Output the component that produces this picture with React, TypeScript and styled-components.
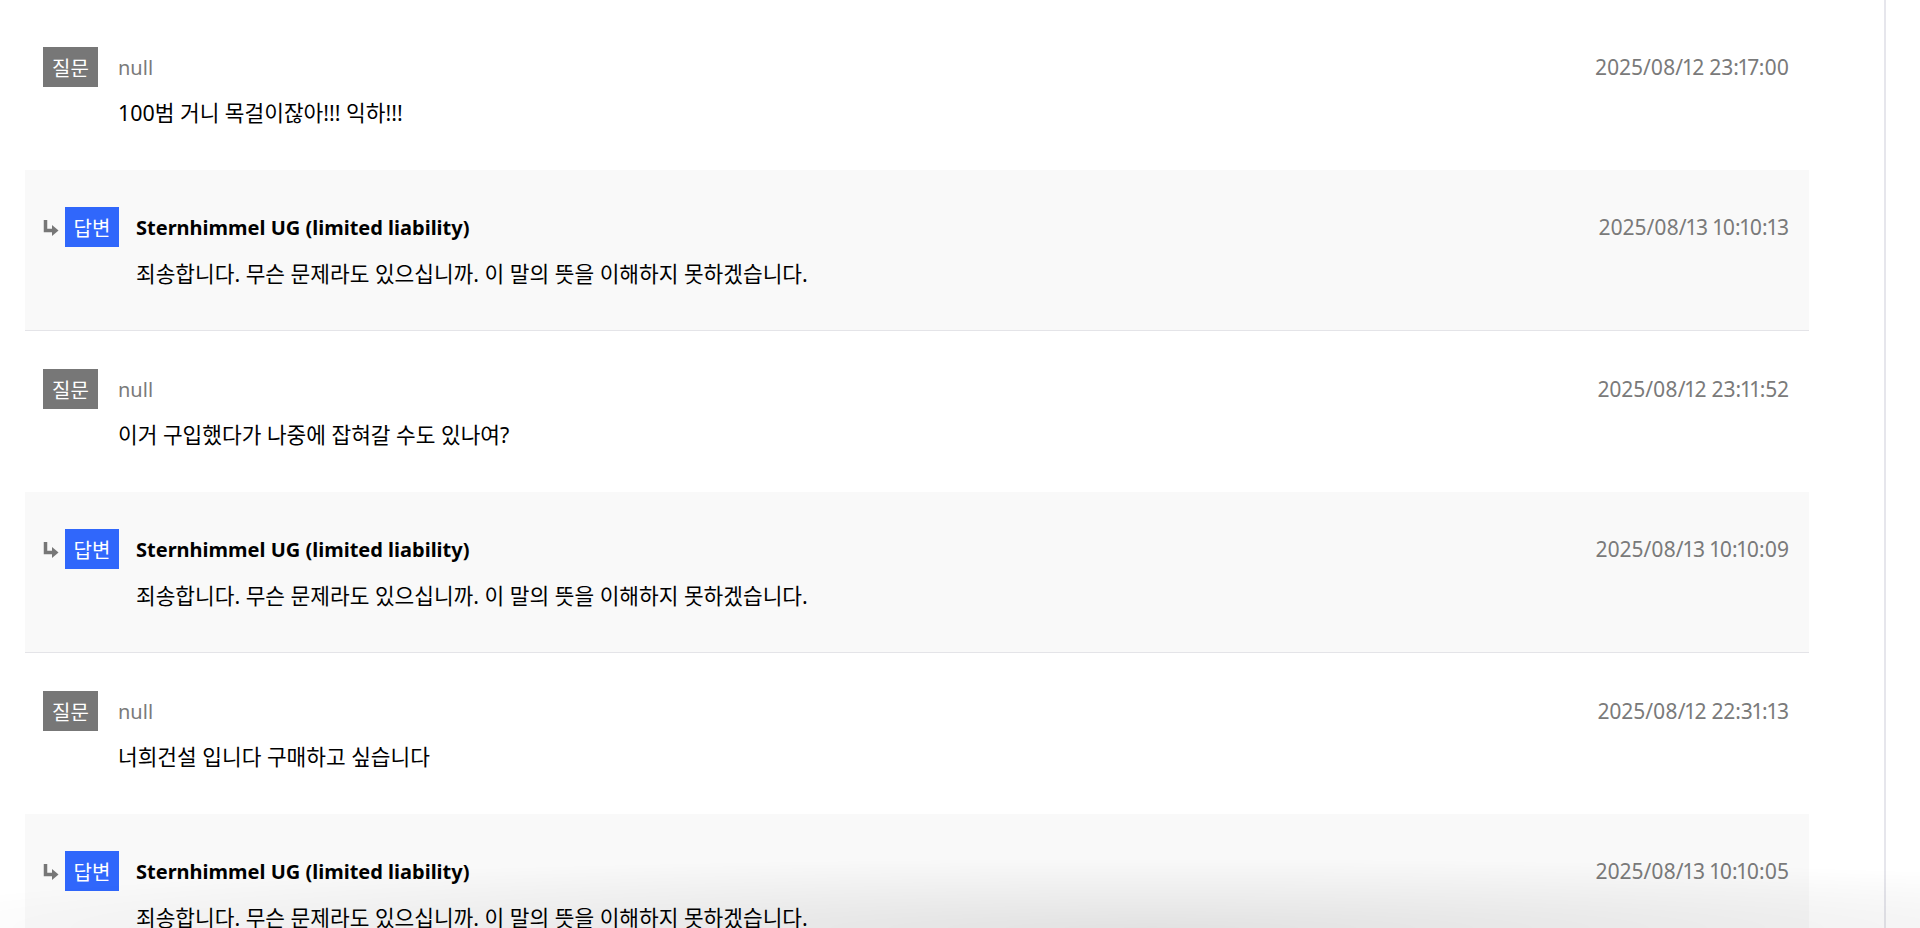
import React from "react";
import styled, { createGlobalStyle } from "styled-components";

type Post = {
  user: string;
  text: string;
  date: string;
};

type Thread = {
  id: number;
  question: Post;
  answer: Post;
};

const SELLER = "Sternhimmel UG (limited liability)";
const SORRY =
  "죄송합니다. 무슨 문제라도 있으십니까. 이 말의 뜻을 이해하지 못하겠습니다.";

const threads: Thread[] = [
  {
    id: 1,
    question: { user: "null", text: "100범 거니 목걸이잖아!!! 익하!!!", date: "2025/08/12 23:17:00" },
    answer: { user: SELLER, text: SORRY, date: "2025/08/13 10:10:13" },
  },
  {
    id: 2,
    question: { user: "null", text: "이거 구입했다가 나중에 잡혀갈 수도 있나여?", date: "2025/08/12 23:11:52" },
    answer: { user: SELLER, text: SORRY, date: "2025/08/13 10:10:09" },
  },
  {
    id: 3,
    question: { user: "null", text: "너희건설 입니다 구매하고 싶습니다", date: "2025/08/12 22:31:13" },
    answer: { user: SELLER, text: SORRY, date: "2025/08/13 10:10:05" },
  },
];

const ReplyArrow = () => (
  <svg width="16" height="17" viewBox="0 0 16 17">
    <path d="M2.5 1 V11.5 H10" fill="none" stroke="#777777" strokeWidth="3.5" />
    <path d="M9 6 L15.5 11.5 L9 17 Z" fill="#777777" />
  </svg>
);

function App() {
  return (
    <>
      <GlobalStyle />
      <Page>
        <List>
          {threads.map((t) => (
            <li key={t.id}>
              <Entry>
                <Header>
                  <Label>
                    <Badge $answer={false}>질문</Badge>
                    <Author $answer={false}>{t.question.user}</Author>
                  </Label>
                  <Stamp>{t.question.date}</Stamp>
                </Header>
                <Body $answer={false}>{t.question.text}</Body>
              </Entry>
              <Entry $answer>
                <Header>
                  <Label>
                    <ReplyArrow />
                    <Badge $answer>답변</Badge>
                    <Author $answer>{t.answer.user}</Author>
                  </Label>
                  <Stamp>{t.answer.date}</Stamp>
                </Header>
                <Body $answer>{t.answer.text}</Body>
              </Entry>
            </li>
          ))}
        </List>
      </Page>
      <BottomShade />
    </>
  );
}

const GlobalStyle = createGlobalStyle`
  body {
    margin: 0;
    background: #ffffff;
    overflow: hidden;
    font-family: "Noto Sans", "Noto Sans CJK KR", sans-serif;
  }
`;

const Page = styled.main`
  box-sizing: border-box;
  width: 1886px;
  min-height: 100vh;
  padding: 9px 75px 0 25px;
  border-right: 2px solid #e6e6ec;
`;

const List = styled.ul`
  list-style: none;
  margin: 0;
  padding: 0;
`;

const Entry = styled.div<{ $answer?: boolean }>`
  padding: ${(p) => (p.$answer ? "37px 20px 41px 18px" : "38px 20px 42px 18px")};
  background: ${(p) => (p.$answer ? "#f9f9f9" : "transparent")};
  border-bottom: ${(p) => (p.$answer ? "1px solid #e4e4e8" : "none")};
`;

const Header = styled.div`
  display: flex;
  align-items: center;
  justify-content: space-between;
  height: 40px;
`;

const Label = styled.div`
  display: flex;
  align-items: center;

  svg {
    margin-right: 6px;
  }
`;

const Badge = styled.span<{ $answer: boolean }>`
  display: flex;
  align-items: center;
  justify-content: center;
  width: ${(p) => (p.$answer ? "54px" : "55px")};
  height: 40px;
  background: ${(p) => (p.$answer ? "#3067fb" : "#777777")};
  color: #ffffff;
  font-size: 20px;
  font-family: "Noto Sans CJK KR", sans-serif;
`;

const Author = styled.span<{ $answer: boolean }>`
  margin-left: ${(p) => (p.$answer ? "17px" : "20px")};
  font-size: 20px;
  font-weight: ${(p) => (p.$answer ? 700 : 400)};
  color: ${(p) => (p.$answer ? "#000000" : "#7a7a7a")};
`;

const Stamp = styled.span`
  font-size: 21px;
  color: #7a7a7a;
  font-variant-numeric: proportional-nums;
`;

const Body = styled.p<{ $answer: boolean }>`
  margin: ${(p) => (p.$answer ? "12px" : "11px")} 0 0;
  padding-left: ${(p) => (p.$answer ? "93px" : "75px")};
  font-size: 21.4px;
  line-height: 30px;
  color: #000000;
`;

const BottomShade = styled.div`
  position: fixed;
  left: 0;
  right: 0;
  bottom: 0;
  height: 70px;
  pointer-events: none;
  background: radial-gradient(
    ellipse 70% 100% at 60% 100%,
    rgba(0, 0, 0, 0.09),
    rgba(0, 0, 0, 0) 100%
  );
`;

export default App;
